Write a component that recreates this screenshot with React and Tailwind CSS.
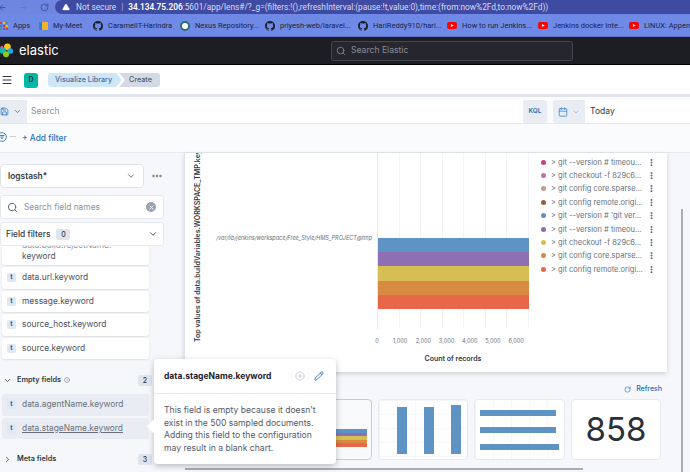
import React from "react";
import { ChevronDown, ChevronRight, Search, Menu, RotateCw, ArrowLeft, ArrowRight, AlertTriangle, X, Pencil, Calendar, CirclePlus, Info, MoreHorizontal, EllipsisVertical, Save } from "lucide-react";

const Gh = () => (
  <svg viewBox="0 0 16 16" className="w-[10px] h-[10px] shrink-0" fill="#1b1f2a"><path d="M8 0C3.58 0 0 3.58 0 8c0 3.54 2.29 6.53 5.47 7.59.4.07.55-.17.55-.38 0-.19-.01-.82-.01-1.49-2.01.37-2.53-.49-2.69-.94-.09-.23-.48-.94-.82-1.13-.28-.15-.68-.52-.01-.53.63-.01 1.08.58 1.23.82.72 1.21 1.87.87 2.33.66.07-.52.28-.87.51-1.07-1.78-.2-3.64-.89-3.64-3.95 0-.87.31-1.59.82-2.15-.08-.2-.36-1.02.08-2.12 0 0 .67-.21 2.2.82.64-.18 1.32-.27 2-.27s1.36.09 2 .27c1.53-1.04 2.2-.82 2.2-.82.44 1.1.16 1.92.08 2.12.51.56.82 1.27.82 2.15 0 3.07-1.87 3.75-3.65 3.95.29.25.54.73.54 1.48 0 1.07-.01 1.93-.01 2.2 0 .21.15.46.55.38A8.01 8.01 0 0 0 16 8c0-4.42-3.58-8-8-8z"/></svg>
);
const Yt = () => (
  <svg viewBox="0 0 14 10" className="w-[10px] h-[7px] shrink-0"><rect width="14" height="10" rx="2.5" fill="#f00"/><path d="M5.5 2.8v4.4L9.5 5z" fill="#fff"/></svg>
);
const Bm = ({ icon, w, children }) => (
  <div className="flex items-center gap-[5px] shrink-0 pt-[1px]" style={{ width: w }}>
    {icon}
    <span className="whitespace-nowrap text-[7.5px] text-[#1c2340] font-['Roboto',sans-serif]">{children}</span>
  </div>
);
const Field = ({ name, muted, link }) => (
  <div className={`h-[21.5px] rounded-[3px] flex items-center gap-[6px] pl-[5px] w-[147px] ml-[2px] ${muted ? "bg-[#e9edf3]" : "bg-white shadow-[0_1px_2px_rgba(0,0,0,0.1)]"}`}>
    <span className="w-[9px] h-[9px] rounded-[2px] bg-[#dce8f5] text-[6.5px] leading-[9px] text-center text-[#3b5b7d] font-bold shrink-0">t</span>
    <span className={`text-[8.4px] whitespace-nowrap ${muted ? "text-[#69707d]" : "text-[#4c5360]"} ${link ? "underline" : ""}`}>{name}</span>
  </div>
);
const legend = [
  ["#c5427d", "> git --version # timeou..."],
  ["#d36ba6", "> git checkout -f 829c6..."],
  ["#b9a086", "> git config core.sparse..."],
  ["#9b5a43", "> git config remote.origi..."],
  ["#5f93c4", "> git --version # 'git ver..."],
  ["#8f6cb4", "> git --version # timeou..."],
  ["#d6bf50", "> git checkout -f 829c6..."],
  ["#d98a42", "> git config core.sparse..."],
  ["#e8674a", "> git config remote.origi..."],
];
const xTicks = ["0", "1,000", "2,000", "3,000", "4,000", "5,000", "6,000"];
const Stack = ({ className }) => (
  <div className={`flex flex-col ${className}`}>
    <div className="flex-1 bg-[#5f93c4]" />
    <div className="flex-1 bg-[#8f6fb3]" />
    <div className="flex-1 bg-[#d6bf52]" />
    <div className="flex-1 bg-[#d98b44]" />
    <div className="flex-1 bg-[#e8674a]" />
  </div>
);

export default function App() {
  return (
    <div className="relative w-[690px] h-[472px] overflow-hidden bg-white font-['Inter','Liberation_Sans',sans-serif] flex flex-col">
      {/* browser url bar */}
      <div className="h-[14px] bg-[#6f86e0] flex items-center shrink-0">
        <div className="w-[55px] flex items-center text-[#3a4a8e] shrink-0">
          <ArrowLeft size={9} strokeWidth={2} className="-ml-[2px]" />
          <ArrowRight size={9} strokeWidth={2} className="ml-[12px] text-[#5f72c6]" />
          <RotateCw size={9} strokeWidth={2} className="ml-[12px]" />
        </div>
        <div className="flex-1 h-[14px] rounded-l-[7px] bg-[#3f4aa3] flex items-center pl-[7px] text-[8.3px] text-[#d8dcf5] whitespace-nowrap overflow-hidden font-['Roboto',sans-serif]">
          <AlertTriangle size={8} fill="#fff" strokeWidth={1} className="text-white mr-[6px] shrink-0" />
          <span className="mr-[5px]">Not secure</span>
          <span className="mr-[5px] text-[#a8afdd]">|</span>
          <span className="font-semibold text-white">34.134.75.206</span>
          <span>:5601/app/lens#/?_g=(filters:!(),refreshInterval:(pause:!t,value:0),time:(from:now%2Fd,to:now%2Fd))</span>
        </div>
      </div>
      {/* bookmarks */}
      <div className="h-[23px] bg-[#6f8ae6] border-b border-[#5a6fc8] flex items-center shrink-0 overflow-hidden">
        <Bm w="39px" icon={<span className="grid grid-cols-3 gap-[1px] w-[8px] shrink-0">{["#e33","#fb0","#3a5","#37c","#e33","#fb0","#3a5","#37c","#e33"].map((c, i) => <i key={i} className="w-[2px] h-[2px]" style={{ background: c }} />)}</span>}>Apps</Bm>
        <Bm w="54px" icon={<span className="w-[9px] h-[8px] rounded-[1px] bg-[#f0b429] border-l-[3px] border-[#2f7de1] shrink-0" />}>My-Meet</Bm>
        <Bm w="87px" icon={<Gh />}>CaramelIT-Harindra</Bm>
        <Bm w="85px" icon={<span className="w-[10px] h-[10px] rounded-full border-2 border-[#2a6f6f] bg-white shrink-0" />}>Nexus Repository...</Bm>
        <Bm w="93px" icon={<Gh />}>priyesh-web/laravel...</Bm>
        <Bm w="89px" icon={<Gh />}>HariReddy910/hari...</Bm>
        <Bm w="91px" icon={<Yt />}>How to run Jenkins...</Bm>
        <Bm w="91px" icon={<Yt />}>Jenkins docker Inte...</Bm>
        <Bm w="61px" icon={<Yt />}>LINUX: Append</Bm>
      </div>
      {/* elastic header */}
      <div className="h-[28px] bg-[#1d1e24] border-b border-black flex items-center shrink-0">
        <svg viewBox="0 0 16 16" className="w-[15px] h-[15px] ml-[-1px] shrink-0">
          <circle cx="9" cy="4" r="3.6" fill="#f9c51b" />
          <circle cx="12" cy="8.5" r="3" fill="#1ba9f5" />
          <circle cx="4" cy="8" r="3.4" fill="#00bfb3" />
          <circle cx="7.5" cy="12" r="3.2" fill="#93c90e" />
          <circle cx="3" cy="4.5" r="1.6" fill="#f04e98" />
        </svg>
        <span className="ml-[5px] w-[42px] text-[13px] text-white leading-none">elastic</span>
        <div className="ml-[270px] w-[242px] h-[20px] rounded-[3px] bg-[#25262e] border border-[#464852] flex items-center gap-[5px] pl-[4px]">
          <Search size={10} className="text-[#8a8d96]" />
          <span className="text-[8.6px] text-[#8a8d96]">Search Elastic</span>
        </div>
      </div>
      {/* breadcrumbs */}
      <div className="h-[29px] bg-white flex items-center shrink-0 pt-[1px]">
        <Menu size={12} strokeWidth={2.2} className="ml-[1px] text-[#343741]" />
        <div className="ml-[11px] w-[14px] h-[15px] rounded-[3px] bg-[#00b8a8] text-[7px] font-semibold text-[#1a2a2a] flex items-center justify-center">D</div>
        <div className="ml-[10px] w-[74px] h-[14px] pl-[7px] bg-[#cfe6f7] text-[7.2px] font-medium text-[#3d6ea0] flex items-center rounded-l-[3px] whitespace-nowrap [clip-path:polygon(0_0,92%_0,100%_50%,92%_100%,0_100%)]">Visualize Library</div>
        <div className="-ml-[3px] w-[41px] h-[14px] pl-[10px] bg-[#d3dae6] text-[7.2px] font-medium text-[#535966] flex items-center rounded-r-[3px] [clip-path:polygon(0_0,100%_0,100%_100%,0_100%,6px_50%)]">Create</div>
      </div>
      {/* query bar */}
      <div className="h-[3px] bg-[#e1e4ea] shrink-0" />
      <div className="h-[27px] bg-[#fafbfd] border-b border-[#e3e8ef] flex pt-[3px] shrink-0">
        <div className="w-[27px] h-[23px] bg-[#e9edf3] flex items-center text-[#1f6fbd]">
          <Save size={9} className="shrink-0" />
          <ChevronDown size={9} className="ml-[4px]" />
        </div>
        <div className="w-[496px] h-[23px] bg-white flex items-center pl-[4px] text-[8.6px] text-[#8d939e]">Search</div>
        <div className="w-[24px] h-[23px] bg-[#e9edf3] rounded-r-[3px] flex items-center justify-center text-[6.5px] font-semibold text-[#2a6db0]">KQL</div>
        <div className="w-[6px]" />
        <div className="w-[32px] h-[23px] bg-[#e9edf3] rounded-l-[3px] flex items-center pl-[5px] text-[#3d8bd4]">
          <Calendar size={10} />
          <ChevronDown size={8} className="ml-[4px] text-[#7fa6cf]" />
        </div>
        <div className="flex-1 h-[23px] bg-white flex items-center pl-[5px] text-[8.6px] text-[#343741]">Today</div>
      </div>
      {/* filters */}
      <div className="h-[29px] bg-[#fafbfd] border-b border-[#e3e8ef] flex items-center shrink-0">
        <svg viewBox="0 0 12 12" className="w-[10px] h-[10px] -ml-[3px] -mt-[3px] shrink-0" fill="none" stroke="#1f6fbd" strokeWidth="1">
          <circle cx="6" cy="6" r="5.2" />
          <path d="M3 4.2h6M4 6h4M5 7.8h2" />
        </svg>
        <span className="ml-[3px] -mt-[3px] w-[6px] h-px bg-[#c9ced6]" />
        <span className="ml-[6px] text-[8.4px] font-medium text-[#1f6fbd]">+ Add filter</span>
      </div>
      {/* body */}
      <div className="flex-1 flex min-h-0 bg-[#f5f7fb]">
        {/* sidebar */}
        <div className="w-[184px] shrink-0 flex flex-col pt-[11px] overflow-hidden">
          <div className="flex items-center">
            <div className="w-[144px] h-[24px] bg-white rounded-[4px] border border-[#dfe4ec] flex items-center pl-[7px] text-[8.4px] font-semibold text-[#343741]">
              logstash*
              <ChevronDown size={10} className="ml-auto mr-[7px] text-[#535966]" />
            </div>
            <MoreHorizontal size={12} strokeWidth={3} className="ml-[7px] text-[#7d818b]" />
          </div>
          <div className="mt-[7px] w-[164px] h-[24px] bg-white rounded-[3px] border border-[#e6eaf0] flex items-center pl-[6px]">
            <Search size={11} className="text-[#535966]" />
            <span className="ml-[6px] text-[8.4px] text-[#8d939e]">Search field names</span>
            <span className="ml-auto mr-[7px] w-[10px] h-[10px] rounded-full bg-[#98a2b3] flex items-center justify-center"><X size={7} strokeWidth={3} className="text-white" /></span>
          </div>
          <div className="mt-[3px] w-[164px] h-[24px] bg-white rounded-[3px] border border-[#e6eaf0] flex items-center pl-[5px] relative z-10">
            <span className="text-[8.4px] font-medium text-[#343741]">Field filters</span>
            <span className="ml-[6px] w-[14px] h-[11px] rounded-[2px] bg-[#dfe5ef] text-[7px] leading-[11px] text-center font-medium text-[#343741]">0</span>
            <ChevronDown size={10} className="ml-auto mr-[5px] text-[#343741]" />
          </div>
          <div className="-mt-[3px] h-[22px] w-[147px] ml-[2px] bg-white rounded-[3px] shadow-[0_1px_2px_rgba(0,0,0,0.1)] overflow-hidden flex flex-col justify-end pl-[20px] pb-[3px] text-[8.4px] leading-[11px] text-[#4c5360]">
            <span className="whitespace-nowrap text-[#8d939e]">data.build.rejectName.</span>
            <span>keyword</span>
          </div>
          <div className="flex flex-col gap-[2px] mt-[2px]">
            <Field name="data.url.keyword" />
            <Field name="message.keyword" />
            <Field name="source_host.keyword" />
            <Field name="source.keyword" />
          </div>
          <div className="mt-[13px] h-[16px] flex items-center pl-[3px] w-[152px]">
            <ChevronDown size={9} className="text-[#343741]" />
            <span className="ml-[5px] text-[7.3px] font-semibold text-[#343741]">Empty fields</span>
            <Info size={6} className="ml-[3px] text-[#69707d]" />
            <span className="ml-auto w-[14px] h-[11px] rounded-[2px] bg-[#dfe5ef] text-[7px] leading-[11px] text-center font-medium text-[#343741]">2</span>
          </div>
          <div className="flex flex-col gap-[2px] mt-[6px]">
            <Field name="data.agentName.keyword" muted />
            <Field name="data.stageName.keyword" muted link />
          </div>
          <div className="mt-[12px] h-[16px] flex items-center pl-[3px] w-[152px]">
            <ChevronRight size={9} className="text-[#343741]" />
            <span className="ml-[5px] text-[7.3px] font-semibold text-[#343741]">Meta fields</span>
            <span className="ml-auto w-[14px] h-[11px] rounded-[2px] bg-[#dfe5ef] text-[7px] leading-[11px] text-center font-medium text-[#343741]">3</span>
          </div>
        </div>
        {/* workspace */}
        <div className="flex-1 flex flex-col min-w-0">
          <div className="w-[483px] h-[219px] bg-white border-l border-[#dfe4ec] shadow-[0_2px_5px_rgba(0,0,0,0.15)] flex shrink-0">
            <div className="w-[192px] relative shrink-0 overflow-hidden">
              <span className="absolute left-[8px] top-0 h-[189px] text-[7px] font-semibold text-[#343741] whitespace-nowrap [writing-mode:vertical-rl] rotate-180">Top values of data.buildVariables.WORKSPACE_TMP.key</span>
              <span className="absolute right-[5px] top-[81px] text-[5.5px] italic text-[#69707d] whitespace-nowrap">/var/lib/jenkins/workspace/Free_Style/HMS_PROJECT@tmp</span>
            </div>
            <div className="w-[152px] shrink-0 flex flex-col">
              <div className="relative h-[176px] border-l border-[#e3e8ef] flex">
                {xTicks.map((t) => <span key={t} className="w-[23.2px] h-full border-r border-[#f1f3f6]" />)}
                <Stack className="absolute left-0 right-0 top-[85px] h-[71px]" />
              </div>
              <div className="flex -ml-[11.6px] mt-[8px] text-[5.6px] leading-[8px] text-[#69707d]">
                {xTicks.map((t) => <span key={t} className="w-[23.2px] text-center shrink-0">{t}</span>)}
              </div>
              <div className="mt-[9px] text-center text-[7px] leading-[9px] font-semibold text-[#343741]">Count of records</div>
            </div>
            <div className="flex-1 flex flex-col pl-[12px] pt-[2.5px] min-w-0">
              {legend.map(([c, t], i) => (
                <div key={i} className="h-[13.4px] shrink-0 flex items-center">
                  <span className="w-[5px] h-[5px] rounded-full shrink-0" style={{ background: c }} />
                  <span className="ml-[5px] w-[96px] text-[7.5px] text-[#69707d] whitespace-nowrap">{t}</span>
                  <EllipsisVertical size={9} strokeWidth={3} className="text-[#535966] shrink-0" />
                </div>
              ))}
            </div>
          </div>
          {/* suggestions */}
          <div className="flex-1">
            <div className="flex items-center justify-end w-[478px] mt-[12px] h-[10px] text-[7px] font-medium text-[#1f6fbd] gap-[5px]">
              <RotateCw size={7} />
              Refresh
            </div>
            <div className="flex gap-[6px] mt-[5px] ml-[130px] h-[61px]">
              <div className="w-[58px] rounded-[4px] bg-[#f8f9fb] border border-[#c5ccd8] flex items-center justify-end pr-[4px] pt-[17px]">
                <Stack className="w-[53px] h-[18px]" />
              </div>
              <div className="w-[90px] rounded-[4px] bg-white bg-[linear-gradient(#f6f7fa_1px,transparent_1px),linear-gradient(90deg,#f6f7fa_1px,transparent_1px)] bg-[size:18px_14px] border border-[#e6eaf0] flex items-end gap-[17px] pl-[18px] pb-[5px]">
                <div className="w-[10px] h-[47px] bg-[#5f93c4]" />
                <div className="w-[10px] h-[47px] bg-[#5f93c4]" />
                <div className="w-[10px] h-[49px] bg-[#5f93c4]" />
              </div>
              <div className="w-[91px] rounded-[4px] bg-white bg-[linear-gradient(90deg,#f6f7fa_1px,transparent_1px)] bg-[size:18px_100%] border border-[#e6eaf0] flex flex-col justify-center gap-[11px] pl-[5px]">
                <div className="w-[76px] h-[6px] bg-[#5f93c4]" />
                <div className="w-[76px] h-[6px] bg-[#5f93c4]" />
                <div className="w-[79px] h-[6px] bg-[#5f93c4]" />
              </div>
              <div className="w-[90px] rounded-[4px] bg-white border border-[#e6eaf0] flex items-center justify-center text-[33px] leading-none text-[#2b2f3a]">858</div>
            </div>
          </div>
        </div>
      </div>
      {/* scrollbars */}
      <div className="absolute left-[681px] top-[209px] bottom-0 w-[2px] bg-[#a9adb5]" />
      <div className="absolute left-[185px] top-[468px] w-[398px] h-[2px] bg-[#a9adb5]" />
      {/* popover */}
      <div className="absolute left-[154px] top-[359px] w-[182px] h-[105px] bg-white rounded-[4px] shadow-[0_2px_6px_rgba(0,0,0,0.25)] flex flex-col z-20">
        <div className="absolute -left-[5px] top-[62px] w-[11px] h-[11px] bg-white rotate-45" />
        <div className="h-[35px] border-b border-[#e3e8ef] flex items-center pl-[10px] pr-[12px] shrink-0">
          <span className="text-[8.5px] font-bold text-[#1f2129] whitespace-nowrap">data.stageName.keyword</span>
          <CirclePlus size={10} className="ml-auto text-[#c2c8d2]" />
          <Pencil size={10} className="ml-[9px] text-[#1f6fbd]" />
        </div>
        <p className="pl-[10px] pr-[8px] pt-[10px] text-[8.6px] leading-[12.5px] text-[#535966] relative">This field is empty because it doesn't exist in the 500 sampled documents. Adding this field to the configuration may result in a blank chart.</p>
      </div>
    </div>
  );
}
